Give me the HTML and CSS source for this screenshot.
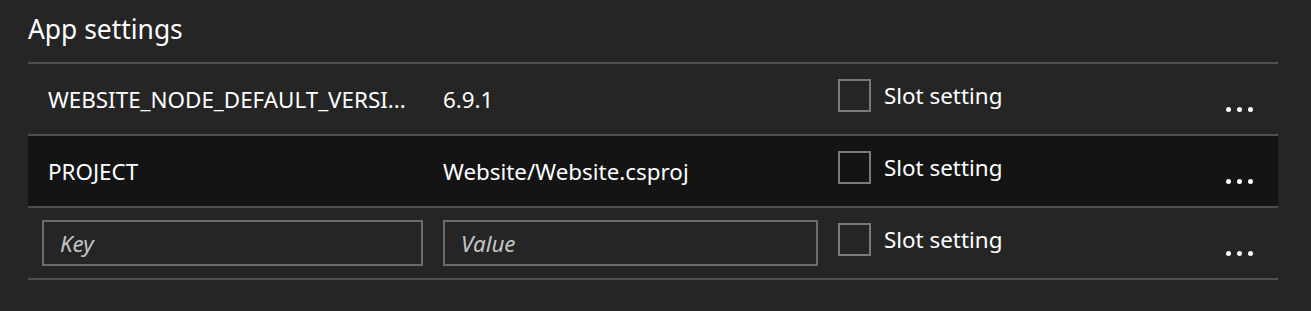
FILE: index.html
```html
<!DOCTYPE html>
<html>
<head>
<meta charset="utf-8">
<link rel="stylesheet" href="styles.css">
</head>
<body>
<section class="panel">
  <h2 class="title">App settings</h2>
  <div class="table">
    <div class="row">
      <div class="cell key"><span class="text key-text">WEBSITE_NODE_DEFAULT_VERSI...</span></div>
      <div class="cell value"><span class="text">6.9.1</span></div>
      <label class="slot"><span class="box"></span><span class="slot-label">Slot setting</span></label>
      <div class="more"><span class="dot"></span><span class="dot"></span><span class="dot"></span></div>
    </div>
    <div class="row selected">
      <div class="cell key"><span class="text key-text">PROJECT</span></div>
      <div class="cell value"><span class="text">Website/Website.csproj</span></div>
      <label class="slot"><span class="box"></span><span class="slot-label">Slot setting</span></label>
      <div class="more"><span class="dot"></span><span class="dot"></span><span class="dot"></span></div>
    </div>
    <div class="row">
      <div class="cell key"><input class="field" type="text" placeholder="Key"></div>
      <div class="cell value"><input class="field" type="text" placeholder="Value"></div>
      <label class="slot"><span class="box"></span><span class="slot-label">Slot setting</span></label>
      <div class="more"><span class="dot"></span><span class="dot"></span><span class="dot"></span></div>
    </div>
  </div>
</section>
</body>
</html>
```

FILE: styles.css
```css
html, body {
  margin: 0;
  padding: 0;
  background: #252525;
}
body {
  font-family: "Noto Sans", "Open Sans", sans-serif;
  color: #ffffff;
}
.panel {
  padding: 0 33px 0 28px;
}
.title {
  margin: 0;
  height: 62px;
  box-sizing: border-box;
  padding-top: 12px;
  font-size: 26.4px;
  font-weight: 400;
  line-height: 34px;
  color: #ffffff;
}
.table {
  border-top: 2px solid #4f4f4f;
}
.row {
  display: flex;
  align-items: center;
  height: 70px;
  border-bottom: 2px solid #4f4f4f;
  padding-left: 14px;
}
.row.selected {
  background: #141414;
}
.cell {
  display: flex;
  align-items: center;
}
.key {
  width: 381px;
  margin-right: 20px;
}
.value {
  width: 375px;
  margin-right: 20px;
}
.text {
  font-size: 22.4px;
  line-height: 30px;
  white-space: nowrap;
  margin-top: 2px;
}
.key-text {
  padding-left: 6px;
}
.field {
  width: 100%;
  height: 46px;
  box-sizing: border-box;
  border: 2px solid #6b6b6b;
  background: transparent;
  color: #ffffff;
  font-family: inherit;
  font-size: 22.4px;
  padding: 0 16px;
  outline: none;
}
.field::placeholder {
  color: #c4c4c4;
  font-style: italic;
}
.slot {
  display: flex;
  align-items: center;
  margin-bottom: 7px;
  width: 388px;
}
.box {
  width: 33px;
  height: 33px;
  box-sizing: border-box;
  border: 2px solid #7a7a7a;
  margin-right: 13px;
}
.slot-label {
  font-size: 22.4px;
  line-height: 30px;
}
.more {
  display: flex;
  gap: 6px;
  margin-top: 20px;
}
.dot {
  width: 5px;
  height: 5px;
  border-radius: 50%;
  background: #ffffff;
}
```
